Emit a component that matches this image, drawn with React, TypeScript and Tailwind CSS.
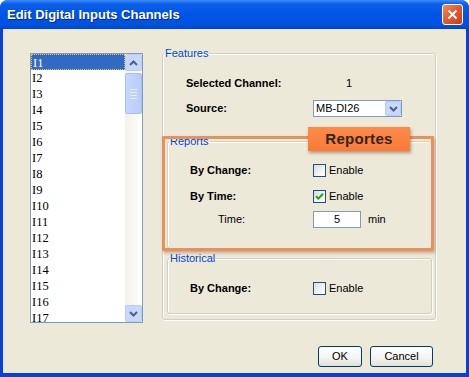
import React from "react";

const channels = Array.from({ length: 17 }, (_, i) => `I${i + 1}`);

function Checkbox({ checked }: { checked?: boolean }) {
  return (
    <span className="flex h-[13px] w-[13px] items-center justify-center border border-[#1C5180] bg-[linear-gradient(135deg,#DCDCD7_0%,#F4F4F0_60%,#FFFFFF_100%)]">
      {checked && (
        <svg width="9" height="9" viewBox="0 0 9 9">
          <path d="M1 4.2 L3.4 6.6 L8 1.8" fill="none" stroke="#21A121" strokeWidth="2" />
        </svg>
      )}
    </span>
  );
}

function Chevron({ up }: { up?: boolean }) {
  return (
    <svg width="9" height="6" viewBox="0 0 9 6">
      <path
        d={up ? "M1 5 L4.5 1.5 L8 5" : "M1 1 L4.5 4.5 L8 1"}
        fill="none"
        stroke="#4D6185"
        strokeWidth="2"
      />
    </svg>
  );
}

function Group({
  title,
  className,
  children,
}: {
  title: string;
  className?: string;
  children: React.ReactNode;
}) {
  return (
    <fieldset
      className={`rounded-[3px] border border-[#D0D0BF] shadow-[inset_1px_1px_0_#fff,1px_1px_0_#fff] ${className ?? ""}`}
    >
      <legend className="ml-[1px] px-[1px] text-[11px] leading-[13px] text-[#0046D5]">
        {title}
      </legend>
      {children}
    </fieldset>
  );
}

function XpButton({ label, w }: { label: string; w: string }) {
  return (
    <button
      className={`${w} h-[21px] rounded-[3px] border border-[#003C74] bg-[linear-gradient(to_bottom,#FFFFFF_0%,#F3F3EF_60%,#E2E0D6_100%)] text-[11px] text-black`}
    >
      {label}
    </button>
  );
}

export default function App() {
  return (
    <div className="flex h-[377px] w-[469px] flex-col overflow-hidden rounded-t-[8px] bg-[#0840D8] font-['Liberation_Sans',Arial,sans-serif]">
      {/* Barra de título */}
      <div className="flex h-[29px] shrink-0 items-center justify-between bg-[linear-gradient(to_bottom,#3D8EF7_0%,#0A5EE8_14%,#0055E5_50%,#0052E0_86%,#0046C8_100%)] pl-[7px] pr-[6px]">
        <span className="text-[13px] font-bold text-white [text-shadow:1px_1px_0_#0A2A8A]">
          Edit Digital Inputs Channels
        </span>
        <span className="flex h-[21px] w-[21px] items-center justify-center rounded-[3px] border border-white bg-[linear-gradient(135deg,#F0885E_0%,#E05A30_50%,#C0401C_100%)]">
          <svg width="11" height="11" viewBox="0 0 11 11">
            <path d="M1.5 1.5 L9.5 9.5 M9.5 1.5 L1.5 9.5" stroke="#fff" strokeWidth="2" />
          </svg>
        </span>
      </div>

      {/* Corpo do diálogo */}
      <div className="mx-[3px] mb-[4px] flex flex-1 items-start bg-[#ECE9D8] pl-[27px] pt-[24px]">
        {/* Lista de canais */}
        <div className="flex h-[270px] w-[113px] border border-[#7F9DB9] bg-white">
          <div className="flex-1 overflow-hidden font-['Liberation_Serif','Times_New_Roman',serif] text-[12.5px]">
            {channels.map((c, i) => (
              <div
                key={c}
                className={`h-[16px] pl-[1px] leading-[16px] ${
                  i === 0
                    ? "border border-dotted border-[#F0C060] bg-[#316AC5] pl-0 leading-[14px] text-white"
                    : "text-black"
                }`}
              >
                {c}
              </div>
            ))}
          </div>
          <div className="flex w-[17px] flex-col bg-[linear-gradient(to_right,#F3F1EC,#FEFEFB)]">
            <div className="flex h-[17px] items-center justify-center rounded-[2px] border border-[#B8CCF8] bg-[#C8D8FB]">
              <Chevron up />
            </div>
            <div className="mt-[2px] flex h-[41px] flex-col items-center justify-center gap-[2px] rounded-[2px] border border-[#A8BEF0] bg-[linear-gradient(to_right,#C6D6FC,#B8CCFA)]">
              <span className="h-px w-[7px] bg-[#E8EEFE]" />
              <span className="h-px w-[7px] bg-[#E8EEFE]" />
              <span className="h-px w-[7px] bg-[#E8EEFE]" />
              <span className="h-px w-[7px] bg-[#E8EEFE]" />
            </div>
            <div className="flex-1" />
            <div className="flex h-[17px] items-center justify-center rounded-[2px] border border-[#B8CCF8] bg-[#C8D8FB]">
              <Chevron />
            </div>
          </div>
        </div>

        {/* Coluna da direita */}
        <div className="-mt-[6px] ml-[19px] flex w-[274px] flex-col">
          <Group title="Features" className="pb-[5px]">
            <div className="ml-[23px] mt-[15px] flex h-[17px] items-center text-[11px]">
              <span className="w-[127px] font-bold text-black">Selected Channel:</span>
              <span className="ml-[33px] text-black">1</span>
            </div>
            <div className="ml-[23px] mt-[8px] flex h-[17px] items-center text-[11px]">
              <span className="w-[127px] font-bold text-black">Source:</span>
              <div className="flex h-[17px] w-[89px] items-center border border-[#7F9DB9] bg-white pl-[2px]">
                <span className="flex-1 text-black">MB-DI26</span>
                <span className="flex h-[15px] w-[16px] items-center justify-center rounded-[2px] border border-[#B8CCF8] bg-[#C8D8FB]">
                  <Chevron />
                </span>
              </div>
            </div>

            <div className="relative ml-[4px] mt-[18px] w-[265px]">
              <Group title="Reports" className="pb-[20px]">
                <div className="ml-[22px] mt-[14px] flex h-[17px] items-center text-[11px]">
                  <span className="w-[123px] font-bold text-black">By Change:</span>
                  <Checkbox />
                  <span className="ml-[3px] text-black">Enable</span>
                </div>
                <div className="ml-[22px] mt-[9px] flex h-[17px] items-center text-[11px]">
                  <span className="w-[123px] font-bold text-black">By Time:</span>
                  <Checkbox checked />
                  <span className="ml-[3px] text-black">Enable</span>
                </div>
                <div className="ml-[22px] mt-[6px] flex h-[17px] items-center text-[11px]">
                  <span className="w-[123px] pl-[28px] text-black">Time:</span>
                  <div className="flex h-[17px] w-[48px] items-center justify-center border border-[#7F9DB9] bg-white text-black">
                    5
                  </div>
                  <span className="ml-[7px] text-black">min</span>
                </div>
              </Group>
              {/* Destaque laranja */}
              <div className="pointer-events-none absolute -bottom-[2px] -left-[5px] -right-[2px] top-[1px] rounded-[1px] border-[3px] border-[#E8905E] shadow-[1px_2px_3px_rgba(120,60,20,0.35)]" />
              <div className="absolute left-[141px] top-[-8px] flex h-[24px] w-[102px] items-center justify-center bg-[linear-gradient(to_bottom,#FF8A48,#FA7A38)] text-[15px] font-bold tracking-[0.3px] text-[#2E2620] shadow-[1px_2px_3px_rgba(90,50,20,0.45)]">
                Reportes
              </div>
            </div>

            <Group title="Historical" className="ml-[4px] mt-[3px] w-[265px] pb-[16px]">
              <div className="ml-[22px] mt-[15px] flex h-[17px] items-center text-[11px]">
                <span className="w-[123px] font-bold text-black">By Change:</span>
                <Checkbox />
                <span className="ml-[3px] text-black">Enable</span>
              </div>
            </Group>
          </Group>

          <div className="mr-[3px] mt-[26px] flex justify-end gap-[8px]">
            <XpButton label="OK" w="w-[44px]" />
            <XpButton label="Cancel" w="w-[63px]" />
          </div>
        </div>
      </div>
    </div>
  );
}
